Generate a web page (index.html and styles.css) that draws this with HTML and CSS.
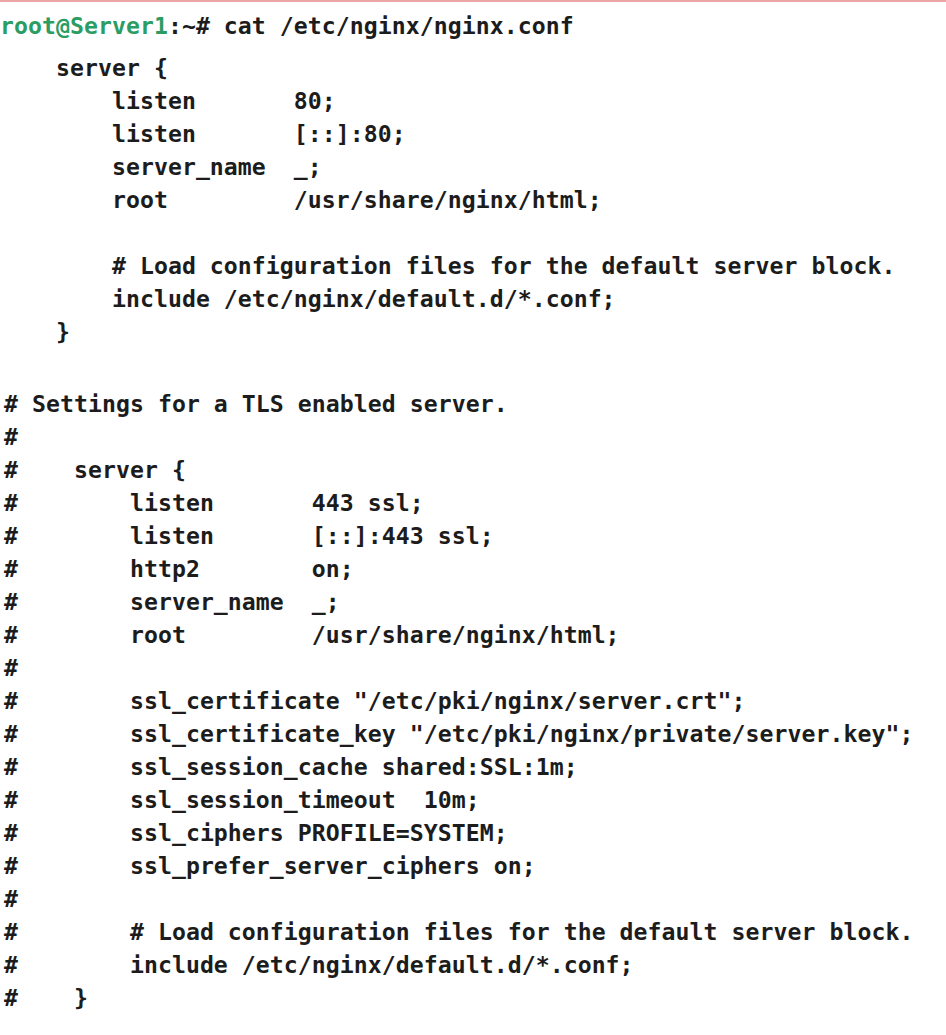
FILE: index.html
```html
<!DOCTYPE html>
<html>
<head>
<meta charset="utf-8">
<link rel="stylesheet" href="styles.css">
</head>
<body>
<div class="terminal">
<div class="line prompt"><span class="host">root@Server1</span>:~# cat /etc/nginx/nginx.conf</div>
<div class="line">    server {</div>
<div class="line">        listen       80;</div>
<div class="line">        listen       [::]:80;</div>
<div class="line">        server_name  _;</div>
<div class="line">        root         /usr/share/nginx/html;</div>
<div class="line"> </div>
<div class="line">        # Load configuration files for the default server block.</div>
<div class="line">        include /etc/nginx/default.d/*.conf;</div>
<div class="line">    }</div>
<div class="line"> </div>
<div class="line c first"># Settings for a TLS enabled server.</div>
<div class="line c">#</div>
<div class="line c">#    server {</div>
<div class="line c">#        listen       443 ssl;</div>
<div class="line c">#        listen       [::]:443 ssl;</div>
<div class="line c">#        http2        on;</div>
<div class="line c">#        server_name  _;</div>
<div class="line c">#        root         /usr/share/nginx/html;</div>
<div class="line c">#</div>
<div class="line c">#        ssl_certificate "/etc/pki/nginx/server.crt";</div>
<div class="line c">#        ssl_certificate_key "/etc/pki/nginx/private/server.key";</div>
<div class="line c">#        ssl_session_cache shared:SSL:1m;</div>
<div class="line c">#        ssl_session_timeout  10m;</div>
<div class="line c">#        ssl_ciphers PROFILE=SYSTEM;</div>
<div class="line c">#        ssl_prefer_server_ciphers on;</div>
<div class="line c">#</div>
<div class="line c">#        # Load configuration files for the default server block.</div>
<div class="line c">#        include /etc/nginx/default.d/*.conf;</div>
<div class="line c">#    }</div>
</div>
</body>
</html>
```
FILE: styles.css
```css
html, body {
  margin: 0;
  padding: 0;
  background: #ffffff;
}
body {
  border-top: 2px solid #eca6a8;
}
.terminal {
  padding: 7px 0 0 0;
  font-family: "DejaVu Sans Mono", "Liberation Mono", monospace;
  font-weight: bold;
  font-size: 23.17px;
  letter-spacing: 0.05px;
  line-height: 33px;
  color: #1c1c1c;
}
.line {
  white-space: pre;
  height: 33px;
}
.prompt {
  margin-bottom: 9px;
}
.host {
  color: #2b9d63;
}
.c {
  padding-left: 4px;
}
.first {
  margin-top: 6px;
}
```
